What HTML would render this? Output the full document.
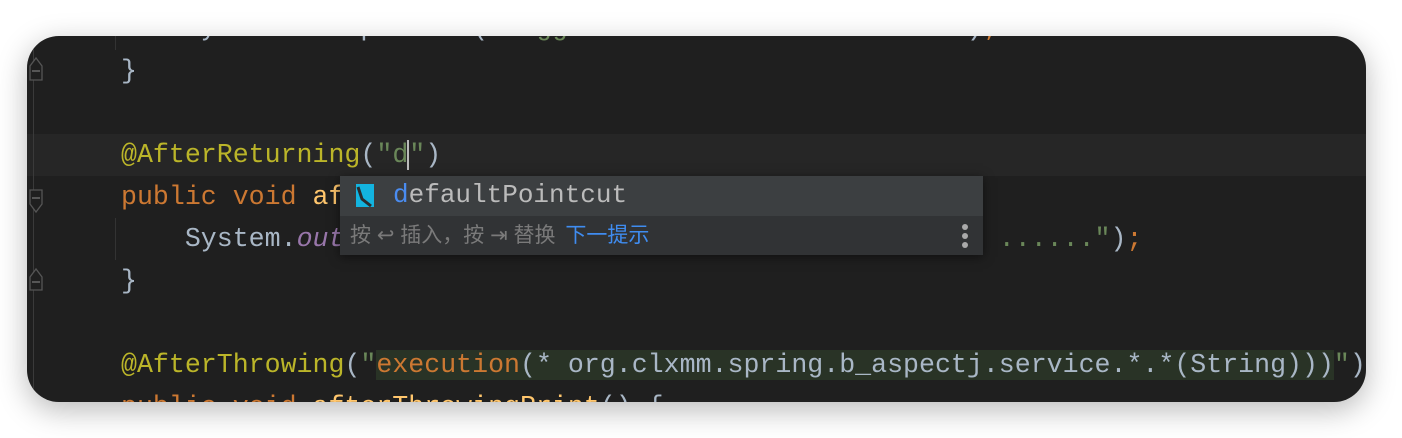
<!DOCTYPE html>
<html><head><meta charset="utf-8"><style>
html,body{margin:0;padding:0;background:#fff;width:1402px;height:438px;overflow:hidden}
.win{position:absolute;left:27px;top:36px;width:1339px;height:366px;border-radius:32px;background:#1f1f1f;overflow:hidden;box-shadow:0 8px 30px rgba(0,0,0,0.28)}
.ln{position:absolute;left:94px;height:42px;line-height:42px;font-family:"Liberation Mono",monospace;font-size:26.6px;color:#a9b7c6;white-space:pre}
.an{color:#bbb529}.kw{color:#cc7832}.st{color:#6a8759}.fn{color:#ffc66d}.pu{color:#9876aa;font-style:italic}
.cur{position:absolute;left:0;right:0;top:98px;height:42px;background:#262626}
.hl{background:#293326}
.pop{position:absolute;left:313px;top:140px;width:643px;height:79px;background:#313335;box-shadow:0 2px 10px rgba(0,0,0,0.5)}
.pop .r1{height:40px;background:#3c3f41;position:relative}
.pop .t{position:absolute;left:53px;top:0;line-height:38px;font-family:"Liberation Mono",monospace;font-size:26px;color:#bbbbbb}
.pop .r2{position:absolute;top:40px;left:10px;line-height:39px;font-family:"Liberation Sans","Noto Sans CJK SC",sans-serif;font-size:21px;color:#7a7a7a}
.g{position:absolute;left:6px;top:0;bottom:0;width:1px;background:#3a3a3a}
</style></head><body>
<div class="win">
<div class="cur"></div>
<div class="g"></div>
<svg style="position:absolute;left:0;top:0" width="40" height="366">
<g fill="#1f1f1f" stroke="#555" stroke-width="1.3">
<path d="M3 44 L3 30 L9 22 L15 30 L15 44 Z"/><path d="M3 154 L15 154 L15 168 L9 176 L3 168 Z"/><path d="M3 254 L3 241 L9 233 L15 241 L15 254 Z"/>
</g><g stroke="#777" stroke-width="1.3"><path d="M5 35H13M5 162H13M5 246H13"/></g></svg>
<div style="position:absolute;left:88px;top:0;height:14px;width:1px;background:#333"></div>
<div style="position:absolute;left:88px;top:182px;height:42px;width:1px;background:#333"></div>
<div class="ln" style="top:-29px">    System.<span class="pu">out</span>.println(<span class="st">"Logger afterPrint run ......"</span>)<span class="kw">;</span></div>
<div class="ln" style="top:14px">}</div>
<div class="ln" style="top:98px"><span class="an">@AfterReturning</span>(<span class="st">"d</span><span style="border-left:2px solid #bbb;margin-left:-1px"></span><span class="st">"</span>)</div>
<div class="ln" style="top:140px"><span class="kw">public void </span><span class="fn">afterReturningPrint</span>() {</div>
<div class="ln" style="top:182px">    System.<span class="pu">out</span>.println(<span class="st">"Logger afterReturningPrint run ......"</span>)<span class="kw">;</span></div>
<div class="ln" style="top:224px">}</div>
<div class="ln" style="top:308px"><span class="an">@AfterThrowing</span>(<span class="st">"</span><span class="hl"><span class="kw">execution</span>(* org.clxmm.spring.b_aspectj.service.*.*(String)))</span><span class="st">"</span>)</div>
<div class="ln" style="top:350px"><span class="kw">public void </span><span class="fn">afterThrowingPrint</span>() {</div>
<div class="pop">
<div class="r1">
<svg style="position:absolute;left:16px;top:8px" width="18" height="23"><rect width="18" height="23" fill="#13b4e0"/><path d="M2 3 L6 15 L15 22" stroke="#2a2d30" stroke-width="3" fill="none"/></svg>
<div class="t"><span style="color:#4a8cf0">d</span>efaultPointcut</div>
</div>
<div class="r2">按 ↩ 插入，按 ⇥ 替换 <span style="color:#3f8cf0;margin-left:4px">下一提示</span></div>
<svg style="position:absolute;right:14px;top:48px" width="8" height="26"><circle cx="4" cy="3" r="3" fill="#aaa"/><circle cx="4" cy="12" r="3" fill="#aaa"/><circle cx="4" cy="21" r="3" fill="#aaa"/></svg>
</div>
</div>
</body></html>
